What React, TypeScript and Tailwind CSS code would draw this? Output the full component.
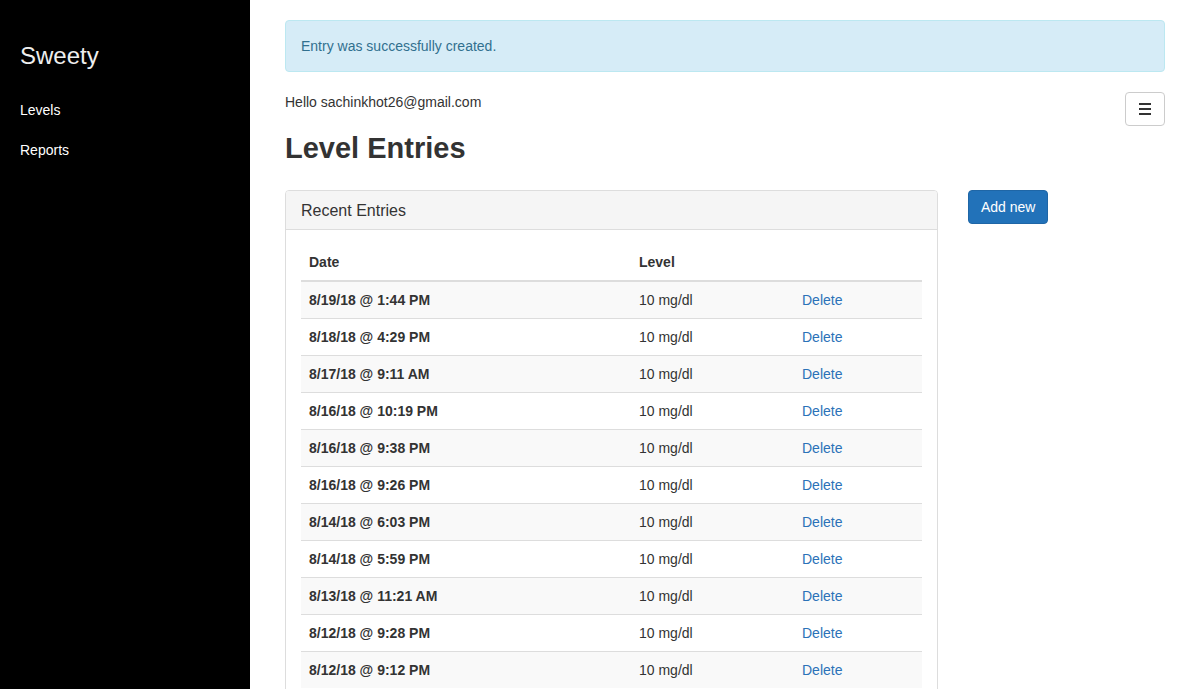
import React from "react";

interface IEntry {
  date: string;
  level: string;
}

const entries: IEntry[] = [
  { date: "8/19/18 @ 1:44 PM", level: "10 mg/dl" },
  { date: "8/18/18 @ 4:29 PM", level: "10 mg/dl" },
  { date: "8/17/18 @ 9:11 AM", level: "10 mg/dl" },
  { date: "8/16/18 @ 10:19 PM", level: "10 mg/dl" },
  { date: "8/16/18 @ 9:38 PM", level: "10 mg/dl" },
  { date: "8/16/18 @ 9:26 PM", level: "10 mg/dl" },
  { date: "8/14/18 @ 6:03 PM", level: "10 mg/dl" },
  { date: "8/14/18 @ 5:59 PM", level: "10 mg/dl" },
  { date: "8/13/18 @ 11:21 AM", level: "10 mg/dl" },
  { date: "8/12/18 @ 9:28 PM", level: "10 mg/dl" },
  { date: "8/12/18 @ 9:12 PM", level: "10 mg/dl" },
];

function Sidebar() {
  return (
    <aside className="w-[250px] shrink-0 bg-black px-5 pt-[40px] text-white">
      <h1 className="text-[24px] leading-[32px] text-[#eeeeee]">Sweety</h1>
      <nav className="mt-[28px] flex flex-col gap-5 text-[14px] leading-5">
        <a href="#">Levels</a>
        <a href="#">Reports</a>
      </nav>
    </aside>
  );
}

function EntriesTable() {
  return (
    <table className="w-full table-fixed border-collapse text-[14px] leading-5">
      <thead>
        <tr>
          <th className="w-[330px] border-b-2 border-[#dddddd] px-2 pt-[7px] pb-2 text-left font-bold">Date</th>
          <th className="w-[163px] border-b-2 border-[#dddddd] px-2 pt-[7px] pb-2 text-left font-bold">Level</th>
          <th className="border-b-2 border-[#dddddd] px-2 pt-[7px] pb-2"></th>
        </tr>
      </thead>
      <tbody>
        {entries.map((entry, i) => (
          <tr key={entry.date} className={i % 2 === 0 ? "bg-[#f9f9f9]" : "bg-white"}>
            <td className={`${i > 0 ? "border-t" : ""} border-[#dddddd] p-2 font-bold`}>{entry.date}</td>
            <td className={`${i > 0 ? "border-t" : ""} border-[#dddddd] p-2`}>{entry.level}</td>
            <td className={`${i > 0 ? "border-t" : ""} border-[#dddddd] p-2`}>
              <a href="#" className="text-[#2b72b8]">
                Delete
              </a>
            </td>
          </tr>
        ))}
      </tbody>
    </table>
  );
}

function App() {
  return (
    <div
      className="flex min-h-screen bg-white text-[#333333]"
      style={{ fontFamily: '"Liberation Sans", Arial, sans-serif' }}
    >
      <Sidebar />
      <main className="flex-1 px-[35px] pt-5">
        <div className="rounded border border-[#bce8f1] bg-[#d6ecf7] px-[15px] py-[15px] text-[14px] leading-5 text-[#31708f]">
          Entry was successfully created.
        </div>
        <div className="mt-5 flex items-start justify-between">
          <p className="text-[14px] leading-5">Hello sachinkhot26@gmail.com</p>
          <button
            type="button"
            className="flex h-[34px] w-10 flex-col items-center justify-center gap-[3px] rounded border border-[#cccccc] bg-white"
          >
            <span className="h-[2px] w-3 bg-[#333333]"></span>
            <span className="h-[2px] w-3 bg-[#333333]"></span>
            <span className="h-[2px] w-3 bg-[#333333]"></span>
          </button>
        </div>
        <h2 className="mt-[6px] text-[29px] font-bold leading-[33px]">Level Entries</h2>
        <div className="mt-[25px] flex items-start">
          <div className="w-[653px] overflow-hidden rounded border border-[#dddddd]">
            <div className="border-b border-[#dddddd] bg-[#f5f5f5] px-[15px] pt-[10px] pb-[9px] text-[16px] leading-[19px]">
              Recent Entries
            </div>
            <div className="p-[15px]">
              <EntriesTable />
            </div>
          </div>
          <button
            type="button"
            className="ml-[30px] h-[34px] rounded border border-[#1f66a6] bg-[#2272b9] px-3 text-[14px] leading-5 text-white"
          >
            Add new
          </button>
        </div>
      </main>
    </div>
  );
}

export default App;
